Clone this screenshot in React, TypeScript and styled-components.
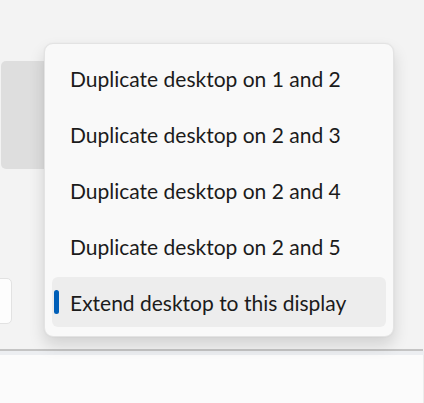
import React from 'react';
import styled, { createGlobalStyle } from 'styled-components';

const GlobalStyle = createGlobalStyle`
    *, *::before, *::after {
        box-sizing: border-box;
    }
    html, body {
        margin: 0;
        padding: 0;
        background: #f3f3f3;
    }
    body {
        font-family: "Segoe UI", Lato, "Noto Sans", sans-serif;
        color: #1b1b1b;
    }
`;

const Page = styled.div`
    width: 424px;
    height: 403px;
    overflow: hidden;
    display: flex;
    flex-direction: column;
    background: #f3f3f3;
`;

const DisplayCard = styled.div`
    position: relative;
    height: 351px;
    flex-shrink: 0;
    border-bottom: 2px solid #c4c4c4;
    margin-right: 1px;
`;

const CardBody = styled.div`
    display: flex;
    flex-direction: column;
    padding-top: 61px;
    padding-left: 1px;
`;

const PreviewTile = styled.div`
    width: 160px;
    height: 108px;
    border-radius: 5px;
    background: #dedede;
`;

const SelectBox = styled.div`
    margin-top: 109px;
    margin-left: -60px;
    width: 71px;
    height: 46px;
    border: 1px solid #e2e2e2;
    border-radius: 5px;
    background: #fdfdfd;
`;

const Band = styled.div`
    height: 4px;
    flex-shrink: 0;
    background: #eceef1;
`;

const LowerCard = styled.div`
    flex: 1;
    background: #fbfbfb;
    border-right: 1px solid #ececec;
`;

const Menu = styled.ul`
    position: absolute;
    left: 44px;
    top: 43px;
    width: 350px;
    margin: 0;
    padding: 9px 7px;
    list-style: none;
    display: flex;
    flex-direction: column;
    gap: 6px;
    background: #f9f9f9;
    border: 1px solid #e3e3e3;
    border-radius: 9px;
    box-shadow: 0 8px 16px rgba(0, 0, 0, 0.14), 0 0 2px rgba(0, 0, 0, 0.06);
`;

const MenuItem = styled.li<{ $selected?: boolean }>`
    position: relative;
    display: flex;
    align-items: center;
    height: 50px;
    padding-left: 18px;
    border-radius: 6px;
    font-size: 21px;
    background: ${p => (p.$selected ? '#ededed' : 'transparent')};
`;

const Indicator = styled.span`
    position: absolute;
    left: 2px;
    top: 13px;
    width: 5px;
    height: 24px;
    border-radius: 3px;
    background: #005fb8;
`;

const options = [
    'Duplicate desktop on 1 and 2',
    'Duplicate desktop on 2 and 3',
    'Duplicate desktop on 2 and 4',
    'Duplicate desktop on 2 and 5',
    'Extend desktop to this display',
];

const selectedIndex = 4;

export default function App() {
    return (
        <>
            <GlobalStyle />
            <Page>
                <DisplayCard>
                    <CardBody>
                        <PreviewTile />
                        <SelectBox />
                    </CardBody>
                    <Menu>
                        {options.map((label, i) => (
                            <MenuItem key={label} $selected={i === selectedIndex}>
                                {i === selectedIndex && <Indicator />}
                                {label}
                            </MenuItem>
                        ))}
                    </Menu>
                </DisplayCard>
                <Band />
                <LowerCard />
            </Page>
        </>
    );
}
